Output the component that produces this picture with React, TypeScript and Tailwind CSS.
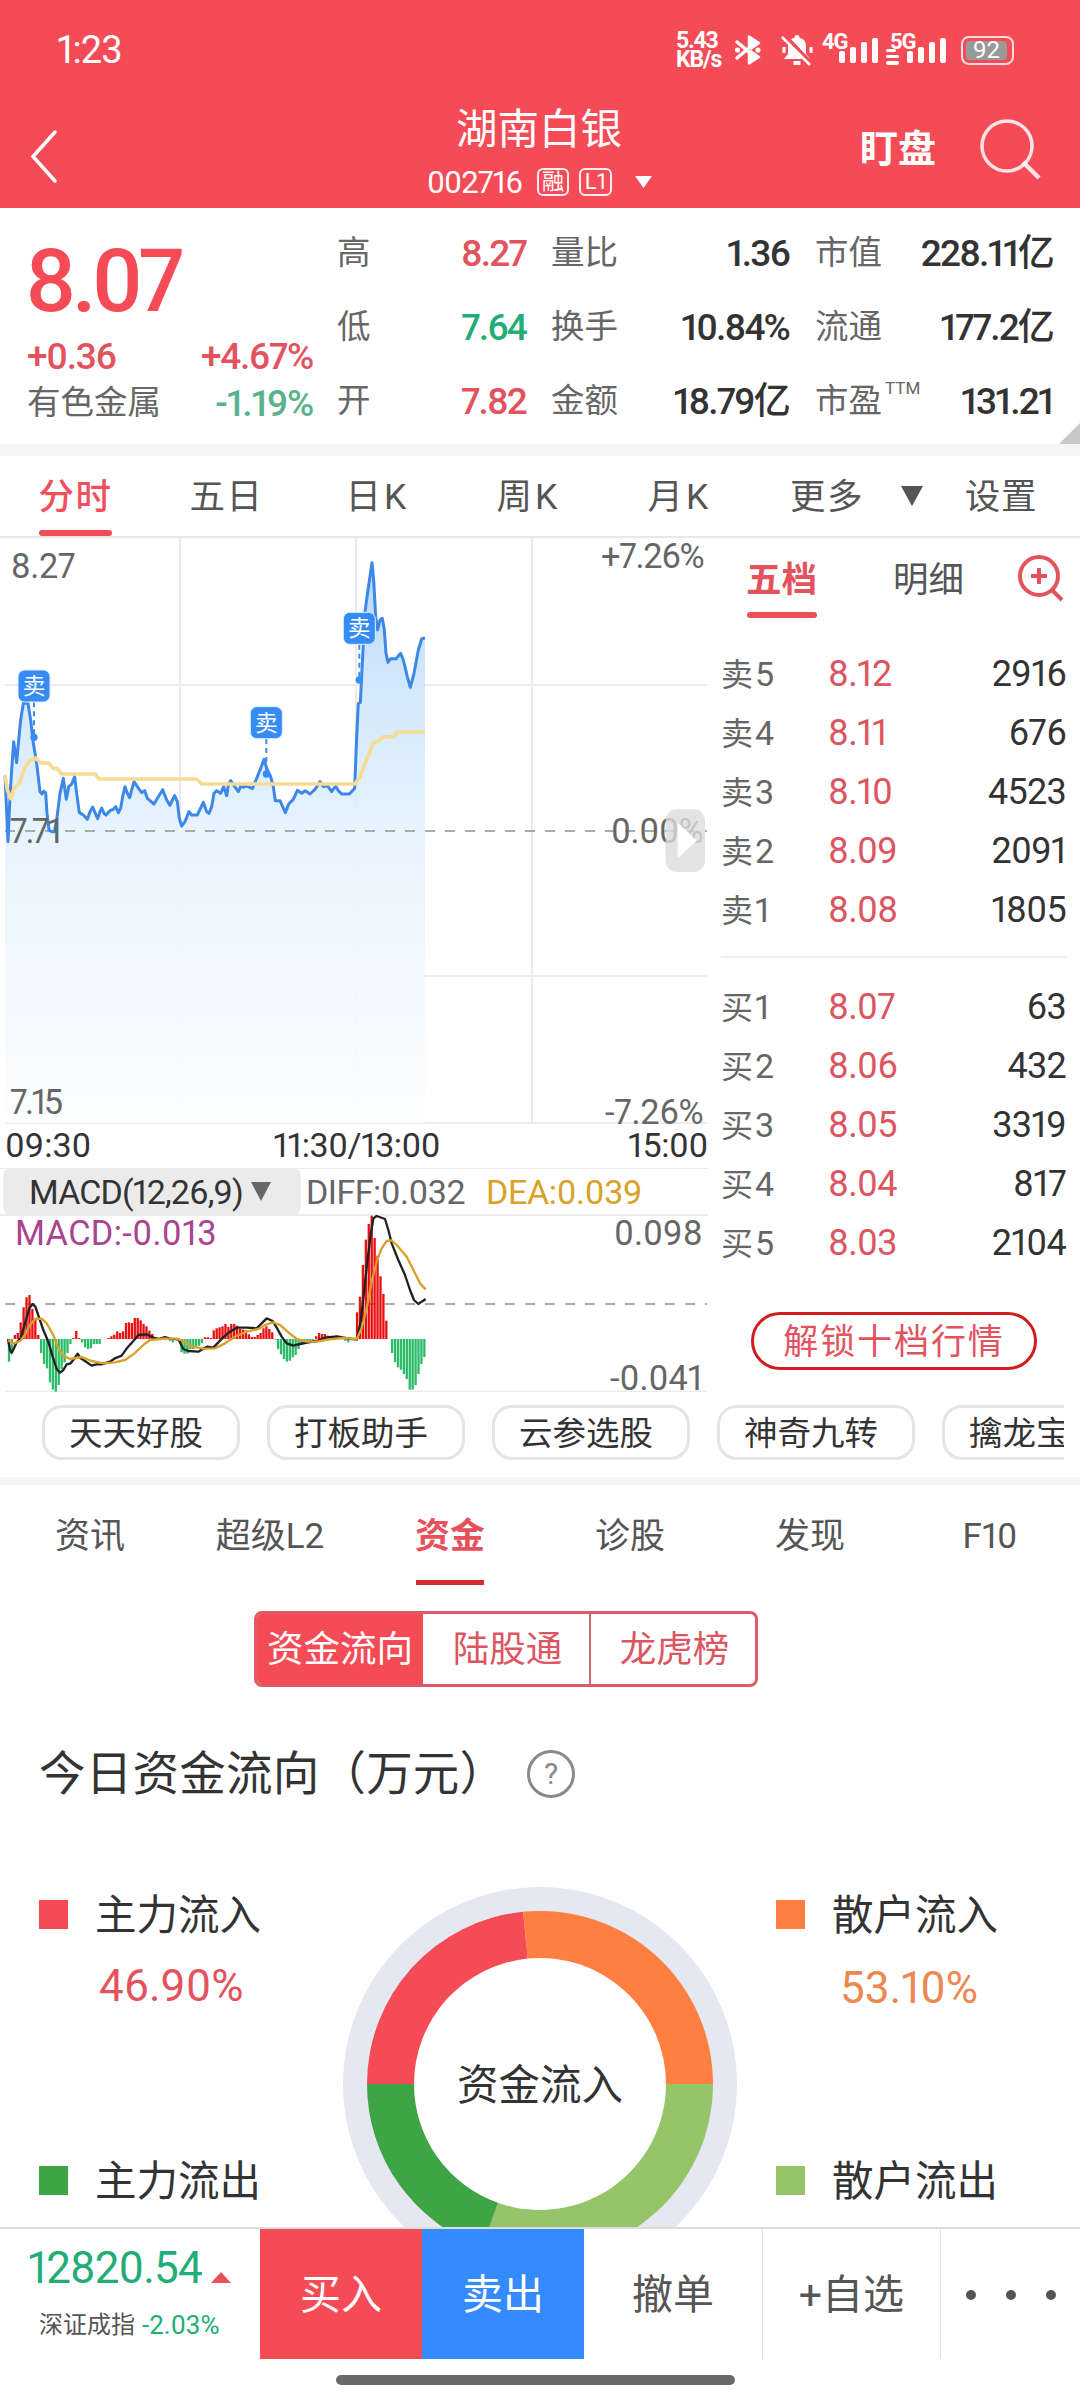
import { Fragment } from 'react';
import type { ReactNode } from 'react';
import clsx from 'clsx';

const SELLS = [
  ['卖5', '8.12', '2916'],
  ['卖4', '8.11', '676'],
  ['卖3', '8.10', '4523'],
  ['卖2', '8.09', '2091'],
  ['卖1', '8.08', '1805'],
];

const BUYS = [
  ['买1', '8.07', '63'],
  ['买2', '8.06', '432'],
  ['买3', '8.05', '3319'],
  ['买4', '8.04', '817'],
  ['买5', '8.03', '2104'],
];

const CHIPS = ['天天好股', '打板助手', '云参选股', '神奇九转', '擒龙宝典'];
const INFO_TABS = ['资讯', '超级L2', '资金', '诊股', '发现', 'F10'];

// Chart coordinates are in thirds of a pixel
const PRICE =
  '15,735 24,935 30,800 35,720 41,635 46,670 50,698 56,630 62,570 70,520 84,520 92,570 100,640 110,700 120,785 126,792 131,784 137,788 141,850 147,900 155,905 163,905 170,870 180,790 190,745 194,775 199,808 206,770 215,762 224,740 230,790 238,848 250,855 262,868 270,845 278,831 286,850 293,866 300,845 305,834 312,850 318,855 330,842 340,838 347,830 355,848 362,835 368,800 375,770 382,790 389,803 395,780 402,755 412,770 425,788 434,782 442,805 462,822 475,800 488,779 500,810 510,826 518,808 524,797 532,815 538,865 545,888 555,875 567,845 575,855 592,855 600,838 610,817 620,845 627,850 635,830 642,790 650,782 662,790 671,769 676,785 680,797 685,765 692,752 702,767 715,785 722,768 728,772 740,768 757,776 768,750 780,720 792,688 800,715 812,740 820,770 826,812 840,812 848,830 856,848 866,822 880,808 892,781 905,790 916,782 930,792 945,778 960,755 970,770 982,767 995,785 1007,768 1015,782 1025,792 1048,792 1064,775 1070,620 1075,520 1081,518 1088,380 1095,245 1104,180 1116,98 1121,150 1127,260 1133,300 1140,270 1147,265 1153,300 1158,370 1164,397 1172,386 1188,386 1202,370 1210,390 1222,440 1231,472 1242,430 1255,360 1265,327 1275,323';
const AVERAGE =
  '15,735 22,780 32,806 42,775 58,760 75,712 90,692 108,684 120,698 147,700 160,715 172,716 185,732 285,732 297,747 590,747 605,762 1065,762 1080,740 1095,700 1110,665 1120,637 1135,635 1147,621 1180,620 1190,606 1275,606';

const MARKERS = [
  { x: 102, y: 421, dot: 622 },
  { x: 799, y: 531, dot: 732 },
  { x: 1078, y: 248, dot: 450 },
];

const MACD_BARS = [
  -68, -40, 12, 18, 50, 95, 125, 132, 90, 60, 12, -42, -75, -88, -130, -152, -158, -138, -90, -70,
  -42, -15, 3, 24, 3, -10, -25, -30, -28, -15, -15, -15, 0, 0, 3, 8, 13, 23, 18, 23,
  48, 50, 48, 63, 63, 56, 45, 38, 25, 15, 5, 0, 0, 0, 0, -5, -10, -2, -5, -40,
  -44, -44, -30, -30, -22, -20, -12, 5, 5, 3, 26, 32, 35, 38, 45, 36, 45, 45, 40, 30,
  28, 26, 14, 6, 6, 12, 18, 32, 38, 30, 20, -2, -30, -46, -60, -68, -65, -55, -48, -30,
  -18, -10, -10, -10, -10, 8, 18, 15, 15, 10, 8, 6, 5, 3, 2, -6, -10, -4, 2, 80,
  127, 222, 298, 345, 370, 303, 250, 188, 135, 55, 0, -42, -70, -85, -92, -105, -120, -152, -152, -138,
  -105, -75, -54,
];
const DIFF =
  '24,402 30,435 35,444 42,430 50,412 62,400 75,355 88,310 98,297 106,305 118,340 130,375 145,410 158,455 170,492 180,503 190,495 200,478 212,475 222,462 233,446 242,460 255,468 275,482 290,478 305,478 330,470 345,460 365,452 382,428 400,408 415,390 440,388 460,398 475,402 495,396 510,401 535,403 550,432 565,438 595,440 612,430 622,425 640,428 655,412 672,395 690,380 710,368 740,368 770,370 785,355 800,340 818,348 830,368 845,395 860,415 880,422 900,417 925,412 950,408 975,398 1010,394 1045,400 1070,404 1082,350 1092,260 1102,170 1112,90 1120,40 1130,33 1155,42 1165,75 1175,115 1195,165 1215,210 1230,255 1242,285 1255,297 1265,290 1277,282';
const DEA =
  '24,405 40,416 60,408 75,390 90,360 105,342 125,341 140,355 160,390 175,430 190,452 210,462 245,456 275,468 310,475 345,472 375,465 400,448 430,420 450,405 490,401 530,401 550,408 575,424 610,431 645,430 675,415 705,395 740,380 775,372 800,358 820,352 840,360 865,382 890,402 920,410 950,410 990,403 1030,399 1070,402 1085,370 1100,310 1115,230 1130,170 1145,130 1160,108 1175,106 1190,120 1220,155 1245,205 1260,235 1277,253';

function SignalBars() {
  return (
    <svg width="40" height="25" viewBox="0 0 40 25" fill="#fff">
      <rect x="0" y="13" width="6" height="12" rx="2" />
      <rect x="11" y="9" width="6" height="16" rx="2" />
      <rect x="22" y="4" width="6" height="21" rx="2" />
      <rect x="33" y="0" width="6" height="25" rx="2" />
    </svg>
  );
}

function StatusBar() {
  return (
    <div className="flex h-[100px] items-center pl-[57px] pr-[66px] text-white">
      <span className="text-[38px] tracking-tight">1:23</span>
      <div className="ml-auto flex h-[32px] items-center">
        <div className="w-[59px] text-[23px] font-bold leading-[19px] tracking-tighter">
          <p>5.43</p>
          <p>KB/s</p>
        </div>
        <svg width="26" height="32" viewBox="0 0 26 32" fill="#fff">
          <path d="M14 13 V2.500 L24 9 L15.500 15 M14 19 V29.500 L24 23 L15.500 17 Z" stroke="#fff" strokeWidth="2.500" strokeLinejoin="round" />
          <path d="M2 8 L14 18 M2 24 L14 14" stroke="#fff" strokeWidth="3.500" strokeLinecap="round" />
          <circle cx="2.500" cy="16" r="2.600" />
          <circle cx="23" cy="16" r="2.600" />
        </svg>
        <svg className="ml-[20px]" width="33" height="32" viewBox="0 0 33 32">
          <path d="M16 1 C18 1 18.5 2 18.5 4 C24 5 25 9 25 13 V20 L29 25 H3 L7 20 V13 C7 9 8 5 13.500 4 C13.500 2 14 1 16 1 Z M12.500 27 H19.500 V31 H12.500 Z" fill="#fff" />
          <path d="M3 13 V19 M30 13 V19" stroke="#fff" strokeWidth="3" />
          <path d="M4 2 L32 31" stroke="#f54b57" strokeWidth="4" />
          <path d="M1 3 L29 31" stroke="#fff" strokeWidth="2.500" />
        </svg>
        <div className="relative ml-[8px] h-[32px] w-[57px]">
          <span className="absolute left-0 top-0 text-[22px] font-bold leading-[16px] tracking-tighter">4G</span>
          <div className="absolute bottom-[3px] left-[17px]"><SignalBars /></div>
        </div>
        <div className="relative ml-[7px] h-[32px] w-[64px]">
          <div className="absolute left-0 top-[15px] flex flex-col gap-[3px]">
            <i className="h-[3px] w-[10px] rounded bg-white" />
            <i className="h-[3px] w-[13px] rounded bg-white" />
            <i className="h-[4px] w-[13px] rounded bg-white" />
          </div>
          <span className="absolute left-[4px] top-0 text-[22px] font-bold leading-[16px] tracking-tighter">5G</span>
          <div className="absolute bottom-[3px] left-[21px]"><SignalBars /></div>
        </div>
        <div className="ml-[11px] flex h-[29px] w-[53px] items-center rounded-[8px] border-2 border-white/80 p-[3px]">
          <span className="flex h-[19px] w-[41px] items-center justify-center rounded-[4px] bg-[#999] text-[24px]">92</span>
        </div>
      </div>
    </div>
  );
}

function Header() {
  return (
    <header className="h-[208px] bg-[#f54b57] text-white">
      <StatusBar />
      <div className="flex h-[108px]">
        <svg className="ml-[29px] mt-[30px]" width="30" height="54" viewBox="0 0 30 54" fill="none" stroke="#fff" strokeWidth="3.500">
          <path d="M26 2 L4 26.500 L26 51" strokeLinecap="round" />
        </svg>
        <div className="ml-[260px] flex w-[440px] flex-col items-center">
          <h1 className="mt-[8px] text-[41.5px] leading-[44px]">湖南白银</h1>
          <div className="mt-[14px] flex h-[32px] w-full items-center pl-[108px]">
            <span className="w-[110px] text-[31px] tracking-[-0.03em]">002716</span>
            <span className="flex h-[28px] w-[32px] items-center justify-center rounded-[6px] border-2 border-white/90 text-[22px]">融</span>
            <span className="ml-[10px] flex h-[28px] w-[33px] items-center justify-center rounded-[6px] border-2 border-white/90 text-[22px]">L1</span>
            <svg className="ml-[23px]" width="17" height="12" viewBox="0 0 17 12"><path d="M0 0 H17 L8.500 12 Z" fill="#fff" /></svg>
          </div>
        </div>
        <span className="ml-[101px] mt-[28px] text-[38px] font-bold leading-[42px]">盯盘</span>
        <svg className="ml-[43px] mt-[17px]" width="64" height="64" viewBox="0 0 64 64" fill="none" stroke="#fff" strokeOpacity=".85" strokeWidth="3.500">
          <circle cx="28" cy="29" r="25" />
          <path d="M44 45 L60 61" strokeWidth="4.500" />
        </svg>
      </div>
    </header>
  );
}

function Stat({ label, value, sup, tone = 'text-[#333]' }: { label: string; value: string; sup?: string; tone?: string }) {
  return (
    <div className="flex h-[74px] items-center">
      <span className="text-[33.5px] text-[#666]">{label}</span>
      {sup && <sup className="-top-[13px] ml-[3px] text-[17px] text-[#666]">{sup}</sup>}
      <span className={clsx('ml-auto text-[37px] font-medium tracking-[-0.05em]', tone)}>{value}</span>
    </div>
  );
}

function Quote() {
  return (
    <section className="relative flex h-[236px] pl-[27px] pr-[27px]">
      <div className="w-[286px]">
        <p className="-ml-[2px] mt-[30px] h-[86px] text-[88px] font-medium leading-[86px] tracking-[-0.055em] text-[#f54b57]">8.07</p>
        <div className="mt-[11px] flex h-[42px] items-center justify-between text-[37px] font-medium tracking-[-0.035em] text-[#e2535e]">
          <span>+0.36</span>
          <span>+4.67%</span>
        </div>
        <div className="mt-[4px] flex h-[44px] items-center justify-between">
          <span className="text-[33.5px] text-[#666]">有色金属</span>
          <span className="text-[37px] font-medium tracking-[-0.035em] text-[#5ab28d]">-1.19%</span>
        </div>
      </div>
      <div className="ml-[24px] mt-[8px] w-[189px]">
        <Stat label="高" value="8.27" tone="text-[#e2535e]" />
        <Stat label="低" value="7.64" tone="text-[#21ad75]" />
        <Stat label="开" value="7.82" tone="text-[#e2535e]" />
      </div>
      <div className="ml-[25px] mt-[8px] w-[238px]">
        <Stat label="量比" value="1.36" />
        <Stat label="换手" value="10.84%" />
        <Stat label="金额" value="18.79亿" />
      </div>
      <div className="ml-[26px] mt-[8px] flex-1">
        <Stat label="市值" value="228.11亿" />
        <Stat label="流通" value="177.2亿" />
        <Stat label="市盈" sup="TTM" value="131.21" />
      </div>
      <svg className="absolute bottom-0 right-0" width="21" height="21" viewBox="0 0 21 21"><path d="M21 0 V21 H0 Z" fill="#c8c8c8" /></svg>
    </section>
  );
}

function PeriodTabs() {
  return (
    <nav className="flex h-[82px] border-b-2 border-[#e8e8e8] text-[35.5px] text-[#555]">
      {['分时', '五日', '日K', '周K', '月K'].map((t, i) => (
        <div key={t} className="flex w-[151px] flex-col items-center justify-between">
          <span className={clsx('mt-[16px] leading-[50px]', i > 1 ? 'tracking-[0.09em]' : 'tracking-[0.04em]', i === 0 && 'font-medium text-[#f0505c]')}>{t}</span>
          {i === 0 && <i className="h-[6px] w-[73px] rounded-full bg-[#f04d59]" />}
        </div>
      ))}
      <span className="ml-[35px] mt-[16px] leading-[50px] tracking-[0.04em]">更多</span>
      <svg className="ml-[37px] mt-[30px]" width="22" height="20" viewBox="0 0 22 20"><path d="M0 0 H22 L11 20 Z" fill="#555" /></svg>
      <span className="ml-[42px] mt-[16px] leading-[50px] tracking-[0.02em]">设置</span>
    </nav>
  );
}

function PriceChart() {
  return (
    <svg className="overflow-visible" width="708" height="587" viewBox="0 24 2124 1761" fontSize="103" fill="#666">
      <defs>
        <linearGradient id="area" gradientUnits="userSpaceOnUse" x1="0" y1="98" x2="0" y2="1779">
          <stop offset="0" stopColor="#a9d5fc" />
          <stop offset="0.18" stopColor="#cbe4fa" />
          <stop offset="0.5" stopColor="#e7f3fe" />
          <stop offset="1" stopColor="#fcfeff" />
        </linearGradient>
      </defs>
      <path d="M540 24 V1779 M1068 24 V1779 M1596 24 V1779 M15 465 H2121 M15 1338 H2121 M15 1779 H2121" stroke="#ebebeb" strokeWidth="6" />
      <polygon points={`15,1779 ${PRICE} 1275,1779`} fill="url(#area)" fillOpacity=".93" />
      <path d="M15 903 H2121" stroke="#aaa" strokeWidth="6" strokeDasharray="30 30" />
      <polyline points={PRICE} fill="none" stroke="#3d88e6" strokeWidth="9" strokeLinejoin="round" />
      <polyline points={AVERAGE} fill="none" stroke="#f6db94" strokeWidth="11" strokeLinejoin="round" />
      {MARKERS.map((m) => (
        <Fragment key={m.x}>
          <path d={`M${m.x} ${m.y + 96} V${m.dot}`} stroke="#3d88e6" strokeWidth="6" strokeDasharray="15 12" />
          <circle cx={m.x} cy={m.dot} r="11" fill="#378bf7" />
          <rect x={m.x - 48} y={m.y - 1} width="96" height="96" rx="20" fill="#378bf7" stroke="#d9f0fd" strokeWidth="3" />
          <text x={m.x} y={m.y + 71} textAnchor="middle" fontSize="68" fill="#fff">卖</text>
        </Fragment>
      ))}
      <text x="32" y="144" letterSpacing="-1">8.27</text>
      <text x="2110" y="115" textAnchor="end" letterSpacing="-4">+7.26%</text>
      <text x="30" y="940" letterSpacing="-7">7.71</text>
      <text x="2110" y="940" textAnchor="end" letterSpacing="-1">0.00%</text>
      <text x="30" y="1752" letterSpacing="-8">7.15</text>
      <text x="2110" y="1783" textAnchor="end" letterSpacing="-1">-7.26%</text>
      <rect x="1997" y="838" width="118" height="188" rx="34" fill="#dcdcdc" fillOpacity=".8" />
      <path d="M2036 884 L2086 932 L2036 978 Z" fill="#fff" stroke="#fff" strokeWidth="6" strokeLinejoin="round" />
    </svg>
  );
}

function MacdChart() {
  return (
    <svg className="overflow-visible" width="708" height="177" viewBox="0 33 2124 531" fontSize="103" fill="#666">
      <path d="M15 559 H2121" stroke="#ebebeb" strokeWidth="4" />
      <path d="M15 297 H2121" stroke="#aaa" strokeWidth="6" strokeDasharray="30 30" />
      {MACD_BARS.map((v, i) => (
        <rect key={i} x={23.5 + i * 8.775} y={v > 0 ? 402 - v : 402} width="7" height={Math.abs(v)} fill={v > 0 ? '#ea1010' : '#2cbb69'} />
      ))}
      <polyline points={DIFF} fill="none" stroke="#222" strokeWidth="7" strokeLinejoin="round" />
      <polyline points={DEA} fill="none" stroke="#daa02a" strokeWidth="7" strokeLinejoin="round" />
      <text x="45" y="121" fill="#a9448f" letterSpacing="1">MACD:-0.013</text>
      <text x="2108" y="121" textAnchor="end">0.098</text>
      <text x="2108" y="555" textAnchor="end">-0.041</text>
    </svg>
  );
}

function ChartPanel() {
  return (
    <div className="w-[708px]">
      <PriceChart />
      <div className="flex h-[44px] items-center justify-between border-b border-[#ebebeb] pb-[3px] pl-[5px] text-[34px] text-[#333]">
        <span>09:30</span>
        <span className="pr-[6px] tracking-[-0.015em]">11:30/13:00</span>
        <span className="tracking-[-0.01em]">15:00</span>
      </div>
      <div className="flex h-[47px] items-center border-b-2 border-[#ebebeb] pl-[3px] text-[34px]">
        <div className="flex h-[47px] w-[298px] items-center rounded-[8px] bg-[#ebebeb] pl-[26px] text-[#333]">
          <span className="w-[222px] tracking-[-0.025em]">MACD(12,26,9)</span>
          <svg width="20" height="19" viewBox="0 0 20 19"><path d="M0 0 H20 L10 19 Z" fill="#666" /></svg>
        </div>
        <span className="ml-[5px] w-[180px] tracking-[-0.015em] text-[#666]">DIFF:0.032</span>
        <span className="tracking-[-0.01em] text-[#d8a22a]">DEA:0.039</span>
      </div>
      <MacdChart />
    </div>
  );
}

function Level({ row }: { row: string[] }) {
  return (
    <div className="flex h-[58.8px] items-center text-[36px]">
      <span className="w-[107px] text-[32px] text-[#666]">
        {row[0][0]}
        <span className="ml-[2px] text-[34px]">{row[0][1]}</span>
      </span>
      <span className="tracking-[-0.02em] text-[#dc5560]">{row[1]}</span>
      <span className="ml-auto pr-px tracking-[-0.02em] text-[#333]">{row[2]}</span>
    </div>
  );
}

function OrderBook() {
  return (
    <div className="flex-1 px-[13px]">
      <div className="flex h-[107px] pl-[25px] text-[35.5px]">
        <div className="mt-[17px] flex h-[63px] w-[71px] flex-col items-center justify-between">
          <span className="whitespace-nowrap font-bold leading-[50px] text-[#e2535e]">五档</span>
          <i className="h-[6px] w-[70px] rounded-full bg-[#ea4f5a]" />
        </div>
        <span className="ml-[76px] mt-[17px] whitespace-nowrap leading-[50px] text-[#555]">明细</span>
        <svg className="ml-[53px] mt-[15px] shrink-0" width="48" height="50" viewBox="0 0 48 50" fill="none" stroke="#e2535e" strokeWidth="4">
          <circle cx="22" cy="23" r="19" />
          <path d="M22 15 V31 M14 23 H30 M35 37 L45 47" />
        </svg>
      </div>
      {SELLS.map((r) => <Level key={r[0]} row={r} />)}
      <div className="mb-[20px] mt-[17px] h-[2px] bg-[#efefef]" />
      {BUYS.map((r) => <Level key={r[0]} row={r} />)}
      <button className="ml-[30px] mt-[40px] h-[58px] w-[286px] rounded-full border-[3px] border-[#d01c1c] pt-[4px] text-[35px] leading-none tracking-[0.055em] text-[#e2535e]">
        解锁十档行情
      </button>
    </div>
  );
}

function Legend({ color, label, value, tone }: { color: string; label: string; value?: string; tone?: string }) {
  return (
    <div className="h-[266px]">
      <div className="flex h-[60px] items-center gap-[27px]">
        <i className={clsx('size-[29px]', color)} />
        <span className="pt-[4px] text-[41.5px] text-[#333]">{label}</span>
      </div>
      {value && <p className={clsx('mt-[15px] w-[234px] text-[44px] leading-[54px]', tone)}>{value}</p>}
    </div>
  );
}

// Ring slice between two angles, measured clockwise from the left
function slice(from: number, to: number) {
  const at = (r: number, deg: number) => {
    const a = ((deg + 180) * Math.PI) / 180;
    return `${197 + r * Math.cos(a)} ${197 + r * Math.sin(a)}`;
  };
  return `M${at(173, from)} A173 173 0 0 1 ${at(173, to)} L${at(126, to)} A126 126 0 0 0 ${at(126, from)} Z`;
}

function FundFlow() {
  return (
    <section className="px-[39px]">
      <div className="ml-[215px] mt-[24px] flex h-[76px] w-[504px] overflow-hidden rounded-[8px] border-[3px] border-[#dd5b66] text-[36.5px] text-[#dc5560]">
        <div className="flex w-[166px] items-center justify-center bg-[#f54b57] pt-[3px] text-white">资金流向</div>
        <div className="flex w-[168px] items-center justify-center border-r-2 border-[#cc6670] pl-[3px] pt-[3px]">陆股通</div>
        <div className="flex flex-1 items-center justify-center pl-[3px] pt-[3px]">龙虎榜</div>
      </div>
      <div className="mt-[57px] flex h-[60px] items-center text-[#333]">
        <h2 className="w-[468px] whitespace-nowrap text-[46.5px] tracking-[0.005em]">今日资金流向（万元）</h2>
        <span className="ml-[20px] flex size-[48px] items-center justify-center rounded-full border-[3px] border-[#8a8a8a] text-[30px] text-[#888]">?</span>
      </div>
      <div className="mt-[80px] flex">
        <div className="w-[304px]">
          <Legend color="bg-[#f54b57]" label="主力流入" value="46.90%" tone="pl-[60px] text-[#e2535e]" />
          <Legend color="bg-[#3da544]" label="主力流出" />
        </div>
        <svg className="mt-[3px]" width="394" height="394" viewBox="0 0 394 394">
          <circle cx="197" cy="197" r="197" fill="#e5e8f1" />
          <circle cx="197" cy="197" r="127" fill="#fff" />
          <path d={slice(0, 84.4)} fill="#f54b57" />
          <path d={slice(84.4, 180)} fill="#ff7f40" />
          <path d={slice(180, 289.5)} fill="#96c468" />
          <path d={slice(289.5, 360)} fill="#3da544" />
          <text x="197" y="213" textAnchor="middle" fontSize="41.500" fill="#333">资金流入</text>
        </svg>
        <div className="ml-[39px]">
          <Legend color="bg-[#ff7f40]" label="散户流入" value="53.10%" tone="pl-[64px] pt-[2px] text-[#ec8850]" />
          <Legend color="bg-[#96c468]" label="散户流出" />
        </div>
      </div>
    </section>
  );
}

function Action({ children, className }: { children: ReactNode; className: string }) {
  return <button className={clsx('flex h-[130px] items-center justify-center pt-[2px] text-[41px]', className)}>{children}</button>;
}

function BottomBar() {
  return (
    <footer className="h-[173px] shrink-0 border-t-2 border-[#dcdcdc] bg-white">
      <div className="flex h-[129px] text-[#555]">
        <div className="w-[260px] pl-[28px] pt-[14px]">
          <div className="flex h-[50px] items-center text-[44px] text-[#21ad75]">
            <span className="w-[183px] tracking-[-0.02em]">12820.54</span>
            <svg className="mt-[18px]" width="20" height="11" viewBox="0 0 20 11"><path d="M10 0 L20 11 H0 Z" fill="#ea4f5a" /></svg>
          </div>
          <div className="mt-[15px] flex h-[34px] items-center pl-[11px] text-[24px]">
            <span>深证成指</span>
            <span className="ml-[7px] text-[26px] text-[#21ad75]">-2.03%</span>
          </div>
        </div>
        <Action className="w-[162px] bg-[#f54b57] text-white">买入</Action>
        <Action className="w-[162px] bg-[#348aff] text-white">卖出</Action>
        <Action className="w-[179px] border-r border-[#ddd]">撤单</Action>
        <Action className="w-[178px] border-r border-[#ddd]">+自选</Action>
        <Action className="w-[139px] gap-[30px]">
          <i className="size-[10px] rounded-full bg-[#555]" />
          <i className="size-[10px] rounded-full bg-[#555]" />
          <i className="size-[10px] rounded-full bg-[#555]" />
        </Action>
      </div>
      <div className="ml-[336px] mt-[17px] h-[10px] w-[399px] rounded-full bg-[#6a6a6a]" />
    </footer>
  );
}

export default function App() {
  return (
    <div className="flex h-[2400px] w-[1080px] flex-col overflow-hidden bg-white font-[Roboto,'Noto_Sans_CJK_SC',sans-serif] leading-none proportional-nums">
      <main className="h-[2227px] overflow-hidden">
        <Header />
        <Quote />
        <div className="h-[12px] bg-[#f5f5f5]" />
        <PeriodTabs />
        <div className="flex h-[855px]">
          <ChartPanel />
          <OrderBook />
        </div>
        <div className="ml-[42px] mt-[12px] flex h-[55px] w-[1022px] gap-[27px] overflow-hidden">
          {CHIPS.map((c) => (
            <span key={c} className="flex w-[198px] shrink-0 items-center rounded-[20px] border-[3px] border-[#e5e5e5] pl-[24px] pt-[3px] text-[33.5px] text-[#333]">{c}</span>
          ))}
        </div>
        <div className="mt-[17px] h-[8px] bg-[#f5f5f5]" />
        <nav className="flex h-[102px] text-[35px] text-[#555]">
          {INFO_TABS.map((t) => (
            <div key={t} className="flex w-[180px] flex-col items-center">
              <span className={clsx('mt-[27px] leading-[50px]', t === '资金' && 'font-bold text-[#e8505b]')}>{t}</span>
              {t === '资金' && <i className="mt-[18px] h-[5px] w-[68px] bg-[#d42a30]" />}
            </div>
          ))}
        </nav>
        <FundFlow />
      </main>
      <BottomBar />
    </div>
  );
}
